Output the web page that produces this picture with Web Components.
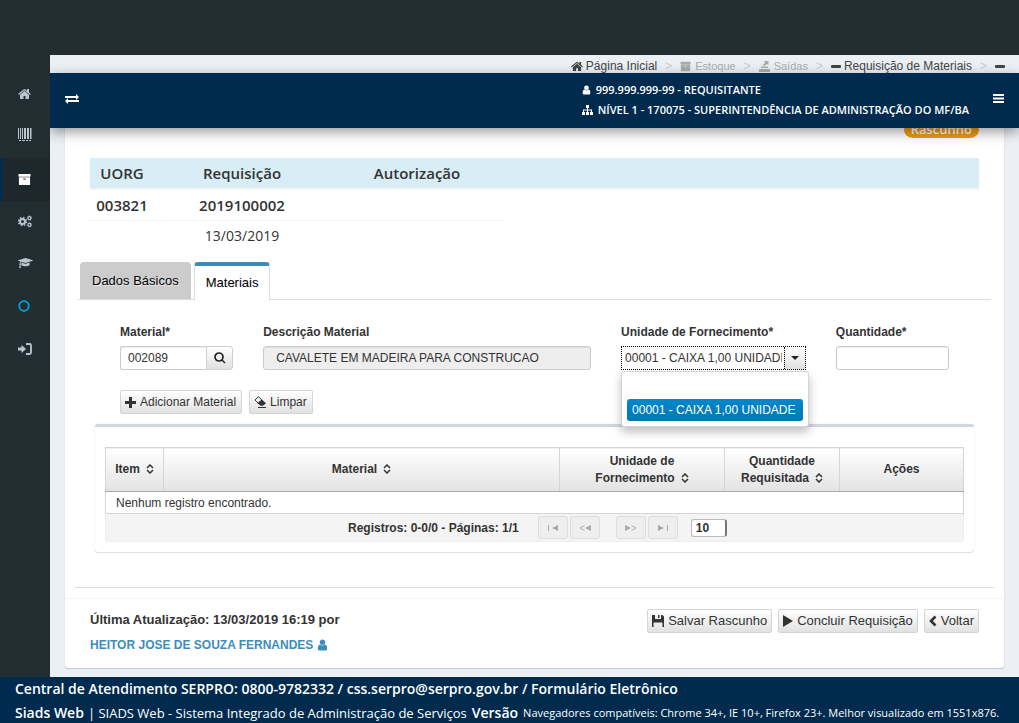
<!DOCTYPE html>
<html lang="pt-BR">
<head>
<meta charset="utf-8">
<meta name="viewport" content="width=device-width, initial-scale=1">
<title>SIADS Web - Requisição de Materiais</title>
<style>
  html, body { margin: 0; min-height: 100%; }
  body { background: #222d32; font-family: "Liberation Sans", Arial, sans-serif; font-size: 12px; color: #333; }
</style>
</head>
<body>
<siads-app></siads-app>

<script>
const ICONS = {
  home: ['0 0 1664 1792', '<path d="M1408 992v480q0 26-19 45t-45 19h-384v-384h-256v384h-384q-26 0-45-19t-19-45v-480q0-1 .5-3t.5-3l575-474 575 474q1 2 1 6zm223-69l-62 74q-8 9-21 11h-3q-13 0-21-7l-692-577-692 577q-12 8-24 7-13-2-21-11l-62-74q-8-10-7-23.5t11-21.5l719-599q32-26 76-26t76 26l244 204v-195q0-14 9-23t23-9h192q14 0 23 9t9 23v408l219 182q10 8 11 21.5t-7 23.5z"/>'],
  user: ['192 64 1408 1664', '<path d="M1536 1399q0 109-62.5 187t-150.5 78h-854q-88 0-150.5-78t-62.5-187q0-85 8.5-160.5t31.5-152 58.5-131 94-89 134.5-34.5q131 128 313 128t313-128q76 0 134.5 34.5t94 89 58.5 131 31.5 152 8.5 160.5zm-256-887q0 159-112.5 271.5t-271.5 112.5-271.5-112.5-112.5-271.5 112.5-271.5 271.5-112.5 271.5 112.5 112.5 271.5z"/>'],
  archive: ['0 0 1792 1792', '<path d="M1088 832q0-26-19-45t-45-19h-256q-26 0-45 19t-19 45 19 45 45 19h256q26 0 45-19t19-45zm576-192v960q0 26-19 45t-45 19h-1408q-26 0-45-19t-19-45v-960q0-26 19-45t45-19h1408q26 0 45 19t19 45zm64-448v256q0 26-19 45t-45 19h-1536q-26 0-45-19t-19-45v-256q0-26 19-45t45-19h1536q26 0 45 19t19 45z"/>'],
  cap: ['0 0 2304 1792', '<path d="M1774 836l18 316q4 69-82 128t-235 93.5-323 34.5-323-34.5-235-93.5-82-128l18-316 574 181q22 7 48 7t48-7zm530-324q0 23-22 31l-1120 352q-4 1-10 1t-10-1l-652-206q-43 34-71 111.5t-34 178.5q63 36 63 109 0 69-58 107l58 433q2 14-8 25-9 11-24 11h-192q-15 0-24-11-10-11-8-25l58-433q-58-38-58-107 0-73 65-111 11-207 98-330l-333-104q-22-8-22-31t22-31l1120-352q4-1 10-1t10 1l1120 352q22 8 22 31z"/>'],
  barcode: ['0 0 14 14', '<path d="M0 0h1v11H0zM2 0h1v11H2zM4 0h1v11H4zM6 0h2v11H6zM9 0h2v11H9zM12 0h1v11h-1zM13.500 0h.5v11h-.5zM1 12h2v1H1zM4 12h3v1H4zM8 12h2v1H8zM11 12h2v1h-2z"/>'],
  cogs: ['0 0 14 12', '<g fill="none" stroke="currentColor"><circle cx="4.500" cy="6" r="2.500" stroke-width="2"/><circle cx="4.500" cy="6" r="4" stroke-width="1.400" stroke-dasharray="1.570 1.570"/><circle cx="11.500" cy="2.600" r="1.500" stroke-width="1.200"/><circle cx="11.500" cy="2.600" r="2.200" stroke-width=".8" stroke-dasharray=".86 .86"/><circle cx="11.500" cy="9.400" r="1.500" stroke-width="1.200"/><circle cx="11.500" cy="9.400" r="2.200" stroke-width=".8" stroke-dasharray=".86 .86"/></g>'],
  ring: ['0 0 12 12', '<circle cx="6" cy="6" r="4.800" fill="none" stroke="currentColor" stroke-width="1.800"/>'],
  signin: ['0 0 14 12', '<path d="M0 4.500h3.500V2L8 6l-4.500 4V7.500H0z"/><path d="M8 1h3.500Q13 1 13 2.500v7q0 1.500-1.500 1.500H8" fill="none" stroke="currentColor" stroke-width="1.800"/>'],
  swap: ['0 0 14 10', '<path d="M0 2h11V0l3 3-3 3V4H0zM14 6H3V4L0 7l3 3V8h11z"/>'],
  sitemap: ['0 0 11 10', '<path d="M4 0h3v3H4zM0 7h3v3H0zM4 7h3v3H4zM8 7h3v3H8zM5 3h1v4H5zM1 4.500h9V7H9V5.500H2V7H1z"/>'],
  bars: ['0 0 11 9', '<path d="M0 0h11v2H0zM0 3.500h11v2H0zM0 7h11v2H0z"/>'],
  minus: ['0 0 10 10', '<rect y="4" width="10" height="3" rx="1"/>'],
  outbox: ['0 0 11 11', '<path d="M0 8h11v3H0z"/><path d="M2 5.500h7v1.500H2zM3.500 4L6 2 5 0h4.500v4L8 3 5.500 5z"/>'],
  search: ['0 0 12 12', '<circle cx="5" cy="5" r="4" fill="none" stroke="currentColor" stroke-width="1.700"/><path d="M7.500 8.500l1-1 3 3-1 1z"/>'],
  plus: ['0 0 11 11', '<path d="M4 0h3v4h4v3H7v4H4V7H0V4h4z"/>'],
  eraser: ['0 0 12 12', '<path d="M4.500 .7L8 4.200 4.500 7.500 .9 4z" fill="none" stroke="currentColor"/><path d="M7.800 3.500L12 7.300 9 9.800H6.500L3.500 7zM4 11h8v1H4z"/>'],
  save: ['0 0 12 12', '<path d="M0 0h3v4h6V0h1.500L12 1.500V12h-1.500V7.500h-9V12H0zM6 0h1.500v3H6z"/>'],
  play: ['0 0 10 12', '<path d="M0 0l10 6-10 6z"/>'],
  back: ['0 0 8 12', '<path d="M6.500 1.500L2 6l4.500 4.500" fill="none" stroke="currentColor" stroke-width="2.600"/>'],
  sort: ['0 0 8 10', '<path d="M1 4l3-3 3 3M1 6l3 3 3-3" fill="none" stroke="currentColor" stroke-width="1.500"/>'],
  caret: ['0 0 8 4', '<path d="M0 0h8L4 4z"/>'],
  first: ['0 0 10 6', '<path d="M0 0h1v6H0zM10 0v6L4 3z"/>'],
  prev: ['0 0 12 6', '<path d="M12 0v6L6 3z"/><path d="M5.500.5L1 3l4.500 2.500" fill="none" stroke="currentColor"/>'],
  next: ['0 0 12 6', '<path d="M0 0v6l6-3z"/><path d="M6.500.5L11 3 6.500 5.500" fill="none" stroke="currentColor"/>'],
  last: ['0 0 10 6', '<path d="M9 0h1v6H9zM0 0v6l6-3z"/>']
};

/* Registers an element whose shadow root is cloned from one template. */
function define(name, css, html) {
  const tpl = document.createElement('template');
  tpl.innerHTML = '<style>*{box-sizing:border-box}' + css + '</style>' + html;
  customElements.define(name, class extends HTMLElement {
    constructor() {
      super();
      this.attachShadow({ mode: 'open' }).append(tpl.content.cloneNode(true));
    }
  });
}

customElements.define('ui-icon', class extends HTMLElement {
  connectedCallback() {
    const [box, body] = ICONS[this.getAttribute('name')];
    const w = this.getAttribute('w') || 14, h = this.getAttribute('h') || w;
    const root = this.shadowRoot || this.attachShadow({ mode: 'open' });
    root.innerHTML = '<style>:host{display:inline-flex;flex:none}svg{display:block;fill:currentColor}</style>' +
      `<svg aria-hidden="true" viewBox="${box}" width="${w}" height="${h}">${body}</svg>`;
  }
});

define('ui-button', `
  :host{display:inline-flex}
  button{display:flex;align-items:center;gap:4px;height:24px;padding:var(--button-padding, 0 5px 0 4px);border:1px solid #d4d4d4;border-radius:2px;
    background:linear-gradient(#fff,#e1e1e1);font:var(--button-font, 12px/20px "Liberation Sans",Arial,sans-serif);color:#333;white-space:nowrap}
`, '<button type="button"><slot></slot></button>');

define('side-nav', `
  :host{display:block;width:50px;flex:none;background:#222d32;color:#b8c7ce;position:relative;z-index:3}
  ul{list-style:none;margin:0;padding:18px 0 0}
  a{display:flex;align-items:center;height:41px;padding-left:18px;color:inherit}
  .active{background:#1e282c;color:#fff;border-left:3px solid #002b4e;padding-left:15px;height:43px;margin-top:3px}
  .ring{color:#00a7e0;height:45px}
`, `<nav aria-label="Menu"><ul>
  <li><a href="#" aria-label="Início"><ui-icon name="home" w="13" h="14"></ui-icon></a></li>
  <li><a href="#" aria-label="Patrimônio"><ui-icon name="barcode" w="14"></ui-icon></a></li>
  <li><a href="#" aria-label="Estoque" class="active"><ui-icon name="archive" w="13"></ui-icon></a></li>
  <li><a href="#" aria-label="Configurações"><ui-icon name="cogs" w="14" h="13"></ui-icon></a></li>
  <li><a href="#" aria-label="Treinamento"><ui-icon name="cap" w="15" h="12"></ui-icon></a></li>
  <li><a href="#" aria-label="Ajuda" class="ring"><ui-icon name="ring" w="12"></ui-icon></a></li>
  <li><a href="#" aria-label="Sair"><ui-icon name="signin" w="14" h="12"></ui-icon></a></li>
</ul></nav>`);

define('bread-crumb', `
  :host{display:block;background:#ecf0f5;height:18px;padding-right:14px;color:#444}
  ol{display:flex;justify-content:flex-end;align-items:center;list-style:none;margin:0;padding:3px 0 0;font-size:12px;line-height:16px}
  li{display:flex;align-items:center}
  li+li::before{content:">";color:#ccc;padding:0 8px;font-size:12px}
  a{display:flex;align-items:center;gap:3px;color:inherit;text-decoration:none}
  .off{color:#aaa;font-size:11px}
  .off a{gap:4px}
`, `<nav aria-label="Trilha"><ol>
  <li><a href="#"><ui-icon name="home" w="12" h="13"></ui-icon>Página Inicial</a></li>
  <li class="off"><a href="#"><ui-icon name="archive" w="11"></ui-icon>Estoque</a></li>
  <li class="off"><a href="#"><ui-icon name="outbox" w="11"></ui-icon>Saídas</a></li>
  <li><a href="#"><ui-icon name="minus" w="10"></ui-icon>Requisição de Materiais</a></li>
  <li><ui-icon name="minus" w="10"></ui-icon></li>
</ol></nav>`);

define('top-bar', `
  :host{display:flex;align-items:center;height:55px;padding:0 15px 4px;background:#002b4e;color:#fff;
    position:relative;z-index:2;box-shadow:0 4px 12px rgba(0,0,0,.4)}
  button{display:flex;border:0;background:none;color:inherit;padding:0}
  .who{margin-left:auto;margin-right:24px;padding-top:2px;font:600 11px/20px "Open Sans",sans-serif}
  .who div{display:flex;align-items:center;gap:5px}
`, `<button type="button" aria-label="Alternar menu"><ui-icon name="swap" w="14" h="10"></ui-icon></button>
<div class="who">
  <div><ui-icon name="user" w="9" h="10"></ui-icon>999.999.999-99 - REQUISITANTE</div>
  <div><ui-icon name="sitemap" w="11" h="10"></ui-icon>NÍVEL 1 - 170075 - SUPERINTENDÊNCIA DE ADMINISTRAÇÃO DO MF/BA</div>
</div>
<button type="button" aria-label="Opções"><ui-icon name="bars" w="11" h="9"></ui-icon></button>`);

define('status-badge', `
  :host{display:block;width:max-content;height:17px;padding:0 7px;border-radius:9px;background:#f39c12;color:#fff;
    font:600 13px/17px "Open Sans",sans-serif}
`, '<slot></slot>');

define('request-summary', `
  :host{display:block}
  table{width:100%;table-layout:fixed;border-collapse:collapse;font:14px/30px "Open Sans",sans-serif;text-align:center;color:#333}
  th,td{padding:0;height:30px}
  th{font-weight:600;font-size:15px}
  thead{background:#d9edf7;border-bottom:2px solid #f4f4f4}
  .line{border-bottom:1px solid #f4f4f4;font-weight:600;font-size:15px}
  .c1{width:64px}.c2{width:176px}.c3{width:174px}
`, `<table>
  <colgroup><col class="c1"><col class="c2"><col class="c3"><col></colgroup>
  <thead><tr><th>UORG</th><th>Requisição</th><th>Autorização</th><td></td></tr></thead>
  <tbody>
    <tr><td class="line">003821</td><td class="line">2019100002</td><td class="line"></td><td></td></tr>
    <tr><td></td><td>13/03/2019</td><td></td><td></td></tr>
  </tbody>
</table>`);

define('tab-bar', `
  :host{display:flex;gap:3px;padding:0 2px;border-bottom:1px solid #ddd}
  button{height:37px;border:1px solid #ccc;border-bottom:0;border-radius:4px 4px 0 0;background:#ccc;
    font:13px/20px "Liberation Sans",Arial,sans-serif;color:#000;padding:0 11px;text-shadow:1px 1px 1px #eee}
  button.on{height:38px;margin-bottom:-1px;background:#fff;border-color:#ddd;border-top:4px solid #3c8dbc}
`, `<button type="button" role="tab" aria-selected="false">Dados Básicos</button><button type="button" role="tab" aria-selected="true" class="on">Materiais</button>`);

define('unit-picker', `
  :host{display:block}
  label{display:block;font-weight:700;font-size:12px;line-height:20px;margin-bottom:4px;white-space:nowrap}
  .wrap{position:relative}
  .box{display:flex;height:24px;border:1px dotted #000;background:#fff;overflow:hidden}
  .value{flex:1;min-width:0;padding:0 2px 0 3px;display:flex}
  select{appearance:none;flex:1;min-width:0;width:0;border:0;padding:0;margin:0;background:#fff;outline:0;
    font:12px/20px "Liberation Sans",Arial,sans-serif;color:#333;border-radius:0;text-overflow:clip;overflow:hidden}
  button{width:21px;flex:none;display:flex;align-items:center;justify-content:center;padding:0;border:1px dotted #000;
    border-width:0 0 0 1px;background:linear-gradient(#fff,#e1e1e1);color:#222}
  ul{position:absolute;top:25px;left:0;right:-3px;margin:0;padding:5px;list-style:none;z-index:1;background:#fff;
    border:1px solid #d5d5d5;border-radius:3px;box-shadow:0 5px 10px rgba(0,0,0,.25)}
  li{height:22px;padding:0 5px;border-radius:3px;line-height:22px;white-space:nowrap}
  li.on{color:#fff;background:linear-gradient(#0088cc,#0077b3)}
`, `<label for="unit">Unidade de Fornecimento*</label>
<div class="wrap"><div class="box"><div class="value"><select id="unit"><option>00001 - CAIXA 1,00 UNIDADE</option></select></div>
<button type="button" aria-label="Abrir lista"><ui-icon name="caret" w="8" h="4"></ui-icon></button></div>
<ul role="listbox"><li role="option"></li><li role="option" class="on" aria-selected="true">00001 - CAIXA 1,00 UNIDADE</li></ul></div>`);

define('material-form', `
  :host{display:block;padding:22px 0 0 30px}
  .row{display:grid;grid-template-columns:repeat(12,minmax(0,1fr))}
  .field{padding-right:30px;grid-column:span 2}
  .field.w5{grid-column:span 5}
  .field.w3{grid-column:span 3}
  label{display:block;font-weight:700;font-size:12px;line-height:20px;margin-bottom:4px;white-space:nowrap}
  input{display:block;width:100%;height:24px;border:1px solid #ccc;border-radius:3px;padding:0 7px;background:#fff;
    font:12px/20px "Liberation Sans",Arial,sans-serif;color:#333;box-shadow:inset 0 1px 1px rgba(0,0,0,.07)}
  input[readonly].gray{background:#eee;padding:0 12px}
  .group{display:flex}
  .group input{flex:1;min-width:0;border-radius:3px 0 0 3px;border-right:0}
  .group button{width:27px;height:24px;display:flex;align-items:center;justify-content:center;padding:0;border:1px solid #d0d0d0;
    border-radius:0 3px 3px 0;background:linear-gradient(#fff,#e1e1e1);color:#222}
  .acts{display:flex;gap:7px;margin-top:20px}
`, `<div class="row">
  <div class="field"><label for="mat">Material*</label><div class="group"><input id="mat" value="002089"><button type="button" aria-label="Pesquisar"><ui-icon name="search" w="12"></ui-icon></button></div></div>
  <div class="field w5"><label for="desc">Descrição Material</label><input id="desc" class="gray" readonly value="CAVALETE EM MADEIRA PARA CONSTRUCAO"></div>
  <div class="field w3"><unit-picker></unit-picker></div>
  <div class="field"><label for="qty">Quantidade*</label><input id="qty"></div>
</div>
<div class="acts">
  <ui-button><ui-icon name="plus" w="11"></ui-icon>Adicionar Material</ui-button>
  <ui-button><ui-icon name="eraser" w="12"></ui-icon>Limpar</ui-button>
</div>`);

define('material-table', `
  :host{display:block;margin:10px 5px 0;padding:20px 10px 10px;border-top:3px solid #d2d6de;border-radius:3px;
    box-shadow:0 1px 1px rgba(0,0,0,.1),0 0 1px rgba(0,0,0,.2)}
  table{width:100%;table-layout:fixed;border-collapse:collapse;font-size:12px}
  th{height:44px;padding:0 10px;border:1px solid #d5d5d5;border-bottom-color:#aaa;background:linear-gradient(#fff,#e3e3e3);line-height:17px}
  td{height:22px;padding:0 10px;border:1px solid #d5d5d5}
  ui-icon{margin-left:6px;vertical-align:-1px}
  .c1{width:58px}.c3{width:165px}.c4{width:115px}.c5{width:124px}
  th:first-child{padding:0 5px}
  .pager{display:flex;align-items:center;height:28px;padding-left:242px;background:#f4f4f4;border:1px solid #eee;border-top:0;border-radius:0 0 3px 3px;font-weight:700}
  .pager button{display:flex;align-items:center;justify-content:center;width:30px;height:23px;margin-right:2px;padding:0;border:1px solid #ddd;
    border-radius:3px;background:#eee;color:#aaa}
  .pager button ui-icon{margin:0}
  .pager span{margin-right:19px}
  .pager .gap{margin-left:14px}
  select{appearance:none;width:36px;height:18px;margin-left:11px;padding:0 4px;border:1px solid #bbb;border-right:2px solid #777;border-radius:3px;background:#fff;
    font:700 12px/14px "Liberation Sans",Arial,sans-serif;color:#333}
`, `<table>
  <colgroup><col class="c1"><col><col class="c3"><col class="c4"><col class="c5"></colgroup>
  <thead><tr>
    <th>Item<ui-icon name="sort" w="8" h="10"></ui-icon></th>
    <th>Material<ui-icon name="sort" w="8" h="10"></ui-icon></th>
    <th>Unidade de<br>Fornecimento<ui-icon name="sort" w="8" h="10"></ui-icon></th>
    <th>Quantidade<br>Requisitada<ui-icon name="sort" w="8" h="10"></ui-icon></th>
    <th>Ações</th>
  </tr></thead>
  <tbody><tr><td colspan="5">Nenhum registro encontrado.</td></tr></tbody>
</table>
<div class="pager">
  <span>Registros: 0-0/0 - Páginas: 1/1</span>
  <button type="button" disabled aria-label="Primeira"><ui-icon name="first" w="10" h="6"></ui-icon></button>
  <button type="button" disabled aria-label="Anterior"><ui-icon name="prev" w="12" h="6"></ui-icon></button>
  <button type="button" disabled class="gap" aria-label="Próxima"><ui-icon name="next" w="12" h="6"></ui-icon></button>
  <button type="button" disabled aria-label="Última"><ui-icon name="last" w="10" h="6"></ui-icon></button>
  <select aria-label="Registros por página"><option>10</option></select>
</div>`);

define('request-footer', `
  :host{display:flex;justify-content:space-between;border-top:1px solid #f4f4f4;padding:10px 25px 12px}
  .info{font-size:13px;line-height:22px;font-weight:700}
  a{display:flex;align-items:center;gap:4px;margin-top:3px;font-size:12px;color:#3c8dbc;text-decoration:none}
  .acts{display:flex;gap:6px;--button-font:13px/20px "Liberation Sans",Arial,sans-serif;--button-padding:0 4px}
`, `<div class="info">Última Atualização: 13/03/2019 16:19 por<a href="#">HEITOR JOSE DE SOUZA FERNANDES<ui-icon name="user" w="11" h="12"></ui-icon></a></div>
<div class="acts">
  <ui-button><ui-icon name="save" w="12"></ui-icon>Salvar Rascunho</ui-button>
  <ui-button><ui-icon name="play" w="10" h="12"></ui-icon>Concluir Requisição</ui-button>
  <ui-button><ui-icon name="back" w="8" h="12"></ui-icon>Voltar</ui-button>
</div>`);

define('content-card', `
  :host{display:block;margin:-10px 15px 9px;background:#fff;border-radius:3px;box-shadow:0 1px 1px rgba(0,0,0,.15),0 0 1px rgba(0,0,0,.2)}
  .body{padding:3px 25px 0}
  status-badge{margin-left:auto}
  request-summary{margin-top:20px}
  tab-bar{margin:11px -12px 0}
  hr{border:0;border-top:1px solid #ddd;margin:35px -15px 10px}
`, `<div class="body">
  <status-badge>Rascunho</status-badge>
  <request-summary></request-summary>
  <tab-bar role="tablist"></tab-bar>
  <material-form></material-form>
  <material-table></material-table>
  <hr>
</div>
<request-footer></request-footer>`);

define('page-footer', `
  :host{display:block;background:#002b4e;color:#fff;padding:0 15px;font:13px/24px "Open Sans",sans-serif;white-space:nowrap;height:46px}
  b{font-weight:600;font-size:14px}
  a{color:inherit;text-decoration:none}
  .row{display:flex}
  .row b+span{margin:0 5px 0 4px}
  small{font-size:11px;margin-left:5px}
`, `<div class="row"><b>Central de Atendimento SERPRO: 0800-9782332 / <a href="#">css.serpro@serpro.gov.br</a> / <a href="#">Formulário Eletrônico</a></b></div>
<div class="row"><b>Siads Web</b><span>| SIADS Web - Sistema Integrado de Administração de Serviços</span><b>Versão</b><small>Navegadores compatíveis: Chrome 34+, IE 10+, Firefox 23+. Melhor visualizado em 1551x876.</small></div>`);

define('siads-app', `
  :host{display:flex;flex-direction:column;min-height:100vh;padding-top:55px;box-sizing:border-box}
  .shell{display:flex;flex:1}
  main{flex:1;min-width:0;background:#ecf0f5}
`, `<div class="shell"><side-nav></side-nav><main>
  <bread-crumb></bread-crumb><top-bar></top-bar><content-card></content-card>
</main></div>
<page-footer></page-footer>`);
</script>
</body>
</html>
